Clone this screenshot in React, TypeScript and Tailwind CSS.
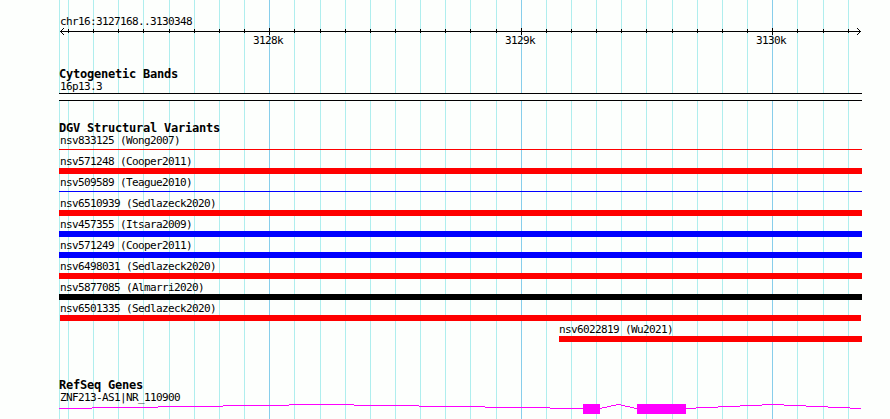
const MINOR_LINES = [
  59, 68, 93, 118, 143, 169, 194, 219, 244, 294, 320, 345, 370, 395, 420, 445, 470, 496, 546, 571,
  596, 621, 646, 672, 697, 722, 747, 797, 823, 848,
];

const MAJOR_LINES = [
  { x: 269, label: '3128k' },
  { x: 521, label: '3129k' },
  { x: 772, label: '3130k' },
];

interface Variant {
  name: string;
  bar: string;
  indent?: string;
}

const VARIANTS: Variant[] = [
  { name: 'nsv833125 (Wong2007)', bar: 'mt-0.5 h-px w-[803px] bg-[#ff0000]' },
  { name: 'nsv571248 (Cooper2011)', bar: 'h-1.5 w-[803px] bg-[#ff0000]' },
  { name: 'nsv509589 (Teague2010)', bar: 'mt-0.5 h-px w-[803px] bg-[#0000ff]' },
  { name: 'nsv6510939 (Sedlazeck2020)', bar: 'h-1.5 w-[803px] bg-[#ff0000]' },
  { name: 'nsv457355 (Itsara2009)', bar: 'h-1.5 w-[803px] bg-[#0000ff]' },
  { name: 'nsv571249 (Cooper2011)', bar: 'h-1.5 w-[803px] bg-[#0000ff]' },
  { name: 'nsv6498031 (Sedlazeck2020)', bar: 'h-1.5 w-[803px] bg-[#ff0000]' },
  { name: 'nsv5877085 (Almarri2020)', bar: 'h-1.5 w-[803px] bg-black' },
  { name: 'nsv6501335 (Sedlazeck2020)', bar: 'ml-px h-1.5 w-[801px] bg-[#ff0000]' },
  { name: 'nsv6022819 (Wu2021)', bar: 'ml-px h-1.5 w-[303px] bg-[#ff0000]', indent: 'pl-[499px]' },
];

// [start, end, y] runs of the intron line
const INTRONS = [
  [59, 92, 408], [92, 158, 407], [158, 223, 406], [223, 289, 405], [289, 354, 404],
  [354, 419, 405], [419, 485, 406], [485, 550, 407], [550, 583, 408],
  [600, 602, 408], [602, 607, 407], [607, 611, 406], [611, 616, 405], [616, 621, 404],
  [621, 625, 405], [625, 630, 406], [630, 634, 407], [634, 637, 408],
  [686, 696, 408], [696, 718, 407], [718, 740, 406], [740, 762, 405], [762, 784, 404],
  [784, 806, 405], [806, 828, 406], [828, 850, 407], [850, 861, 408],
];

const Label = ({ children }: { children: string }) => (
  <div className="h-3 pl-px text-[11px] leading-[14px] tracking-[-0.62px]">{children}</div>
);

const Heading = ({ children }: { children: string }) => (
  <h2 className="h-3 text-[12px] leading-3 font-bold tracking-[-0.225px]">{children}</h2>
);

const GridLines = () => (
  <svg className="absolute inset-0" width="890" height="419" shapeRendering="crispEdges">
    {MINOR_LINES.map((x) => (
      <rect key={x} x={x} y="0" width="1" height="419" fill="#afeeee" />
    ))}
    {MAJOR_LINES.map(({ x }) => (
      <rect key={x} x={x} y="0" width="1" height="419" fill="#87ceeb" />
    ))}
  </svg>
);

const Ruler = () => (
  <svg className="block" width="803" height="20" viewBox="59 27 803 20">
    <g shapeRendering="crispEdges">
      <rect x="60" y="31" width="801" height="1" />
      {MINOR_LINES.slice(1).map((x) => (
        <rect key={x} x={x} y="29" width="1" height="4" />
      ))}
      {MAJOR_LINES.map(({ x }) => (
        <rect key={x} x={x} y="28" width="1" height="7" />
      ))}
      {[1, 2, 3].map((d) => (
        <g key={d}>
          <rect x={60 + d} y={31 - d} width="1" height="1" />
          <rect x={60 + d} y={31 + d} width="1" height="1" />
          <rect x={860 - d} y={31 - d} width="1" height="1" />
          <rect x={860 - d} y={31 + d} width="1" height="1" />
        </g>
      ))}
    </g>
    {MAJOR_LINES.map(({ x, label }) => (
      <text key={x} x={x - 16} y="44" fontSize="11" letterSpacing="-0.62">
        {label}
      </text>
    ))}
  </svg>
);

const GeneModel = () => (
  <svg className="block" width="803" height="10" viewBox="59 404 803 10" shapeRendering="crispEdges" fill="#ff00ff">
    {INTRONS.map(([start, end, y]) => (
      <rect key={start} x={start} y={y} width={end - start} height="1" />
    ))}
    <rect x="583" y="404" width="17" height="10" />
    <rect x="637" y="404" width="49" height="10" />
  </svg>
);

export default function App() {
  return (
    <main className="relative h-[419px] w-[890px] overflow-hidden bg-[#fdfffd] font-['DejaVu_Sans_Mono',monospace] text-black">
      <GridLines />
      <div className="relative flex w-[862px] flex-col pt-[15px] pl-[59px]">
        <Label>chr16:3127168..3130348</Label>
        <Ruler />

        <section className="mt-[21px]">
          <Heading>Cytogenetic Bands</Heading>
          <Label>16p13.3</Label>
          <div className="mt-px h-2 border-y border-black bg-[#fdfffd]" />
        </section>

        <section className="mt-[21px]">
          <Heading>DGV Structural Variants</Heading>
          {VARIANTS.map(({ name, bar, indent = '' }) => (
            <div key={name} className={`h-[21px] ${indent}`}>
              <Label>{name}</Label>
              <div className="pt-px">
                <div className={bar} />
              </div>
            </div>
          ))}
        </section>

        <section className="mt-[35px]">
          <Heading>RefSeq Genes</Heading>
          <Label>ZNF213-AS1|NR_110900</Label>
          <div className="pt-px">
            <GeneModel />
          </div>
        </section>
      </div>
    </main>
  );
}
